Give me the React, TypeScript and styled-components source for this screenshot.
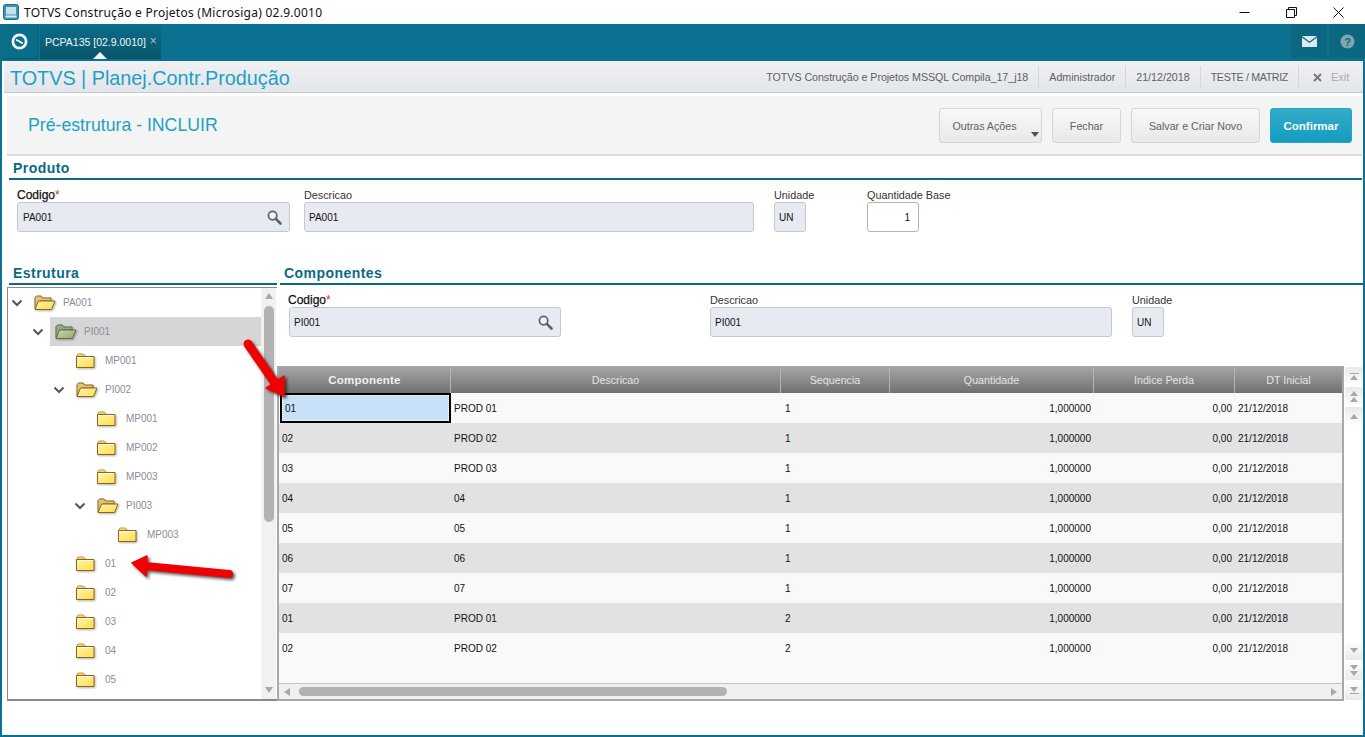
import React, { useId } from "react";
import styled, { createGlobalStyle } from "styled-components";

const Global = createGlobalStyle`
  html, body { margin: 0; padding: 0; background: #fff; overflow: hidden; }
  * { box-sizing: border-box; }
  body { font-family: "Liberation Sans", Arial, sans-serif; }
`;

const TEAL = "#0b7190";
const DARKTEAL = "#0b6a85";

const Page = styled.div`
  position: relative;
  width: 1365px;
  height: 737px;
  display: flex;
  flex-direction: column;
  overflow: hidden;
`;
const TitleBar = styled.div`
  height: 24px;
  display: flex;
  align-items: center;
  padding-left: 3px;
  background: #fff;
`;
const TitleText = styled.span`
  margin-left: 5px;
  font-family: "Noto Sans", sans-serif;
  font-size: 12px;
  letter-spacing: 0.26px;
  color: #111;
  flex: 1;
  white-space: nowrap;
`;
const WinButtons = styled.div`
  display: flex;
  height: 24px;
  padding-right: 3px;
`;
const WinButton = styled.div`
  width: 47px;
  display: flex;
  align-items: center;
  justify-content: center;
`;
const TabBar = styled.div`
  height: 37px;
  background: ${TEAL};
  display: flex;
  align-items: flex-start;
`;
const LogoButton = styled.div`
  width: 37px;
  height: 35px;
  margin-left: 1px;
  background: #0b6d8a;
  border-right: 1px solid #0a5a72;
  border-bottom: 1px solid #0a5a72;
  display: flex;
  align-items: center;
  justify-content: center;
`;
const Tab = styled.div`
  position: relative;
  width: 121px;
  height: 35px;
  margin-left: 2px;
  padding: 11px 0 0 5px;
  background: linear-gradient(#0b6e8b, #0a5568);
  color: #eef6f9;
  font-size: 10.5px;
  white-space: nowrap;
  &::after {
    content: "";
    position: absolute;
    left: 53px;
    bottom: 0;
    border-left: 7px solid transparent;
    border-right: 7px solid transparent;
    border-bottom: 7px solid #f2f3f5;
  }
`;
const TabClose = styled.span`
  margin-left: 4px;
  color: #9fc4d0;
  font-size: 12px;
  position: relative;
  top: -1px;
`;
const Spacer = styled.div`
  flex: 1;
`;
const BarIcon = styled.div`
  width: 36px;
  height: 34px;
  margin-left: 2px;
  background: #0b6780;
  display: flex;
  align-items: center;
  justify-content: center;
`;
const Body = styled.div`
  flex: 1;
  display: flex;
  flex-direction: column;
  border-left: 2px solid ${TEAL};
  border-right: 2px solid ${TEAL};
  border-bottom: 2px solid ${TEAL};
  min-height: 0;
`;
const HeaderBar = styled.div`
  height: 32px;
  margin-left: 2px;
  display: flex;
  align-items: center;
  padding-top: 1px;
  background: linear-gradient(#f0f1f4, #e2e5e9);
  border-bottom: 1px solid #c6c8cb;
`;
const AppName = styled.h1`
  margin: 2px 0 0 6px;
  font-weight: 400;
  font-size: 19.8px;
  color: #1f9fc4;
  flex: 1;
  white-space: nowrap;
`;
const HeaderItem = styled.div<{ $ls?: number }>`
  height: 23px;
  padding: 0 10px;
  display: flex;
  align-items: center;
  font-size: 10.7px;
  letter-spacing: ${(p) => p.$ls ?? 0}px;
  color: #5c6166;
  border-right: 1px solid #d5d7da;
  white-space: nowrap;
`;
const ExitItem = styled.div`
  width: 64px;
  display: flex;
  align-items: center;
  padding-left: 14px;
  font-size: 11px;
  color: #a9adb1;
  gap: 9px;
`;
const SubHeader = styled.div`
  height: 60px;
  margin: 3px 1px 0 5px;
  display: flex;
  align-items: center;
  justify-content: space-between;
  padding: 0 10px 0 21px;
  background: #f3f4f4;
  border-bottom: 2px solid #dcdcdc;
`;
const PageTitle = styled.h2`
  margin: 0;
  font-weight: 400;
  font-size: 17.7px;
  color: #1f9fc4;
`;
const Actions = styled.div`
  display: flex;
  gap: 10px;
`;
const Btn = styled.button<{ $w: number; $primary?: boolean; $pr?: number }>`
  position: relative;
  width: ${(p) => p.$w}px;
  height: 35px;
  border-radius: 3px;
  font-family: "Liberation Sans", sans-serif;
  font-size: ${(p) => (p.$primary ? 11.5 : 10.7)}px;
  font-weight: ${(p) => (p.$primary ? 700 : 400)};
  border: 1px solid ${(p) => (p.$primary ? "#2aa3c4" : "#d5d5d5")};
  color: ${(p) => (p.$primary ? "#f4fbfd" : "#5e6268")};
  background: ${(p) =>
    p.$primary ? "linear-gradient(#35abc8, #139cc2)" : "linear-gradient(#f8f8f8, #e9e9ea)"};
  padding: 2px ${(p) => p.$pr ?? 0}px 0 0;
`;
const Caret = styled.span`
  position: absolute;
  right: 2px;
  bottom: 5px;
  border-left: 4.5px solid transparent;
  border-right: 4.5px solid transparent;
  border-top: 5px solid #4d5257;
`;
const SectionTitle = styled.div<{ $ml: number }>`
  height: 24px;
  margin-left: ${(p) => p.$ml}px;
  padding: 5px 0 0 4px;
  font-size: 14px;
  line-height: 14px;
  font-weight: 700;
  letter-spacing: 0.45px;
  color: ${DARKTEAL};
  border-bottom: 2px solid ${DARKTEAL};
`;
const ProductSection = styled.section`
  margin-right: 1px;
`;
const Fields = styled.div<{ $pl: number; $pt: number }>`
  display: flex;
  padding: ${(p) => p.$pt}px 0 0 ${(p) => p.$pl}px;
`;
const Field = styled.div<{ $w: number; $mr: number }>`
  width: ${(p) => p.$w}px;
  margin-right: ${(p) => p.$mr}px;
  flex: none;
`;
const Label = styled.div<{ $strong?: boolean; $ml?: number }>`
  height: 14px;
  margin-left: ${(p) => p.$ml ?? 0}px;
  font-size: ${(p) => (p.$strong ? 12 : 10.8)}px;
  line-height: 14px;
  color: ${(p) => (p.$strong ? "#111" : "#333")};
  -webkit-text-stroke: ${(p) => (p.$strong ? "0.25px #111" : "0")};
  white-space: nowrap;
  b {
    color: #e3202a;
    font-weight: 400;
    -webkit-text-stroke: 0;
  }
`;
const Input = styled.div<{ $white?: boolean; $right?: boolean; $pl?: number }>`
  position: relative;
  height: 30px;
  display: flex;
  align-items: center;
  justify-content: ${(p) => (p.$right ? "flex-end" : "flex-start")};
  padding: 0 ${(p) => (p.$right ? 8 : 4)}px 0 ${(p) => p.$pl ?? (p.$right ? 8 : 4)}px;
  border: 1px solid ${(p) => (p.$white ? "#b4b4b4" : "#c4c8ce")};
  border-radius: 3px;
  background: ${(p) => (p.$white ? "#fff" : "#e7eaf1")};
  font-size: 10px;
  color: #111;
`;
const SearchSlot = styled.span`
  position: absolute;
  right: 7px;
  top: 7px;
  display: flex;
`;
const Split = styled.div`
  display: flex;
  margin-top: 29px;
`;
const LeftCol = styled.div`
  width: 275px;
  flex: none;
`;
const RightCol = styled.div`
  flex: 1;
  min-width: 0;
`;
const TreePanel = styled.div`
  position: relative;
  width: 270px;
  height: 414px;
  margin: 2px 0 0 5px;
  display: flex;
  border: 1px solid #8a8a8a;
  border-right: none;
  border-bottom-width: 2px;
`;
const TreeList = styled.div`
  flex: 1;
  height: 100%;
  overflow: hidden;
`;
const TreeRowWrap = styled.div<{ $level: number }>`
  height: 29px;
  display: flex;
  padding-left: ${(p) => p.$level * 21}px;
`;
const ChevronSlot = styled.div`
  width: 21px;
  flex: none;
  display: flex;
  align-items: center;
  padding-left: 3px;
`;
const TreeContent = styled.div<{ $selected?: boolean }>`
  flex: 1;
  display: flex;
  align-items: center;
  padding-left: 5px;
  background: ${(p) => (p.$selected ? "#d6d6d6" : "transparent")};
`;
const FolderSlot = styled.div`
  width: 29px;
  flex: none;
  display: flex;
`;
const TreeLabel = styled.span`
  font-size: 10px;
  color: #8b8d98;
`;
const VScroll = styled.div`
  width: 15px;
  height: 100%;
  flex: none;
  background: #f1f1f1;
  display: flex;
  flex-direction: column;
  align-items: center;
  justify-content: space-between;
  padding: 5px 0 6px;
  margin-right: 1px;
`;
const VThumb = styled.div`
  width: 10px;
  height: 216px;
  margin-top: 7px;
  margin-bottom: auto;
  border-radius: 5px;
  background: #b2b2b2;
`;
const ArrowUp = styled.span<{ $c?: string }>`
  width: 0;
  height: 0;
  border-left: 4px solid transparent;
  border-right: 4px solid transparent;
  border-bottom: 6px solid ${(p) => p.$c || "#a8a8a8"};
`;
const ArrowDown = styled.span`
  width: 0;
  height: 0;
  border-left: 4px solid transparent;
  border-right: 4px solid transparent;
  border-top: 6px solid #a8a8a8;
`;
const GridRow = styled.div`
  display: flex;
  margin-top: 29px;
  height: 335px;
`;
const Table = styled.div`
  width: 1067px;
  flex: none;
  display: flex;
  flex-direction: column;
  border: 2px solid #a8a8a8;
  border-top-width: 1px;
  background: #f9f9f9;
`;
const COLS = "172px 330px 109px 204px 141px 1fr";
const HeadRow = styled.div`
  height: 26px;
  flex: none;
  display: grid;
  grid-template-columns: ${COLS};
  background: linear-gradient(#a6a6a6, #707070);
`;
const HeadCell = styled.div<{ $strong?: boolean }>`
  display: flex;
  align-items: center;
  justify-content: center;
  border-right: 1px solid #b5b5b5;
  font-size: ${(p) => (p.$strong ? 11.5 : 10.7)}px;
  font-weight: ${(p) => (p.$strong ? 700 : 400)};
  letter-spacing: ${(p) => (p.$strong ? 0.2 : 0)}px;
  color: ${(p) => (p.$strong ? "#f0f0f0" : "#e4e4e4")};
  &:last-child {
    border-right: none;
  }
`;
const Rows = styled.div`
  flex: 1;
  min-height: 0;
`;
const DataRow = styled.div<{ $alt: boolean }>`
  height: 30px;
  display: grid;
  grid-template-columns: ${COLS};
  background: ${(p) => (p.$alt ? "#e2e2e2" : "#f9f9f9")};
`;
const Cell = styled.div<{ $right?: boolean; $pl?: number; $active?: boolean }>`
  display: flex;
  align-items: center;
  justify-content: ${(p) => (p.$right ? "flex-end" : "flex-start")};
  padding: 0 3px 0 ${(p) => p.$pl ?? 3}px;
  font-size: 10px;
  color: #111;
  ${(p) =>
    p.$active
      ? `background:#c8e1f8;border:2px solid #000;margin-left:1px;padding-left:3px;outline:1px dotted #fff;outline-offset:-3px;`
      : ""}
`;
const HScroll = styled.div`
  height: 16px;
  flex: none;
  display: flex;
  align-items: center;
  padding: 0 5px;
  background: #f0f0f0;
  border-top: 1px solid #c4c4c4;
`;
const HThumb = styled.div`
  width: 428px;
  height: 9px;
  margin-left: 9px;
  margin-right: auto;
  border-radius: 5px;
  background: #b2b2b2;
`;
const ArrowLeft = styled.span`
  border-top: 4px solid transparent;
  border-bottom: 4px solid transparent;
  border-right: 6px solid #a8a8a8;
`;
const ArrowRight = styled.span`
  border-top: 4px solid transparent;
  border-bottom: 4px solid transparent;
  border-left: 6px solid #a8a8a8;
`;
const SideButtons = styled.div`
  width: 19px;
  padding: 1px 0 1px 1px;
  display: flex;
  flex-direction: column;
`;
const SideGroup = styled.div`
  display: flex;
  flex-direction: column;
  gap: 1px;
`;
const SideFill = styled.div`
  flex: 1;
`;
const SideBtn = styled.div<{ $down?: boolean }>`
  height: 19px;
  display: flex;
  flex-direction: column;
  align-items: center;
  justify-content: center;
  gap: 1px;
  border-radius: 2px;
  background: ${(p) =>
    p.$down ? "linear-gradient(#fff, #e9e9e9)" : "linear-gradient(#e9e9e9, #fff)"};
`;
const Bar = styled.span`
  width: 9px;
  height: 1px;
  background: #a8a8a8;
`;
const MiniUp = styled.span`
  border-left: 4.5px solid transparent;
  border-right: 4.5px solid transparent;
  border-bottom: 5px solid #a8a8a8;
`;
const MiniDown = styled.span`
  border-left: 4.5px solid transparent;
  border-right: 4.5px solid transparent;
  border-top: 5px solid #a8a8a8;
`;
const Overlay = styled.svg`
  position: absolute;
  left: 0;
  top: 0;
  pointer-events: none;
  filter: drop-shadow(2px 2px 1.5px rgba(0, 0, 0, 0.65));
`;

function Chevron() {
  return (
    <svg width="12" height="8" viewBox="0 0 12 8">
      <path d="M1.5 1.5 6 6l4.5-4.5" fill="none" stroke="#555" strokeWidth="2" />
    </svg>
  );
}

function Folder({ open, green }: { open?: boolean; green?: boolean }) {
  const id = useId();
  const edge = green ? "#5f6d4b" : "#8a6420";
  const c1 = green ? "#cfdcae" : "#fff6b0";
  const c2 = green ? "#8ea56a" : "#ffdc48";
  const back = green ? "#9aa886" : "#e6c46f";
  return (
    <svg width="23" height="18" viewBox="0 0 23 18" style={{ filter: "drop-shadow(1.5px 1.5px 1px rgba(0,0,0,.3))" }}>
      <defs>
        <linearGradient id={id} x1="0" y1="0" x2="1" y2="1">
          <stop offset="0" stopColor={c1} />
          <stop offset="1" stopColor={c2} />
        </linearGradient>
      </defs>
      {open ? (
        <>
          <path d="M1 15V3.5L2.5 2H7l1.5 2H17v3H6L3 15Z" fill={back} stroke={edge} />
          <path d="M1 15.5 4.5 7H21l-3.5 8.5Z" fill={`url(#${id})`} stroke={edge} />
        </>
      ) : (
        <>
          <path d="M1 5V3l1-1h5l2 2v2H1Z" fill="#f6d66c" stroke="#c9a03c" />
          <path d="M.5 15.5V4.5h17.5v11Z" fill={`url(#${id})`} stroke={edge} />
          <path d="M1 5.5h16" stroke="#fffbe0" />
        </>
      )}
    </svg>
  );
}

type Node = { label: string; level: number; kind: "open" | "closed" | "green"; chevron?: boolean };
const tree: Node[] = [
  { label: "PA001", level: 0, kind: "open", chevron: true },
  { label: "PI001", level: 1, kind: "green", chevron: true },
  { label: "MP001", level: 2, kind: "closed" },
  { label: "PI002", level: 2, kind: "open", chevron: true },
  { label: "MP001", level: 3, kind: "closed" },
  { label: "MP002", level: 3, kind: "closed" },
  { label: "MP003", level: 3, kind: "closed" },
  { label: "PI003", level: 3, kind: "open", chevron: true },
  { label: "MP003", level: 4, kind: "closed" },
  { label: "01", level: 2, kind: "closed" },
  { label: "02", level: 2, kind: "closed" },
  { label: "03", level: 2, kind: "closed" },
  { label: "04", level: 2, kind: "closed" },
  { label: "05", level: 2, kind: "closed" },
];

const rows = [
  ["01", "PROD 01", "1"],
  ["02", "PROD 02", "1"],
  ["03", "PROD 03", "1"],
  ["04", "04", "1"],
  ["05", "05", "1"],
  ["06", "06", "1"],
  ["07", "07", "1"],
  ["01", "PROD 01", "2"],
  ["02", "PROD 02", "2"],
];

function SearchIcon() {
  return (
    <svg width="15" height="15" viewBox="0 0 15 15">
      <circle cx="5.6" cy="5.6" r="4.2" fill="#f1f3f6" stroke="#566370" strokeWidth="1.7" />
      <path d="M8.8 8.8 13.5 13.5" stroke="#566370" strokeWidth="2.6" strokeLinecap="round" />
    </svg>
  );
}

export default function App() {
  return (
    <Page>
      <Global />
      <TitleBar>
        <svg width="16" height="16" viewBox="0 0 16 16">
          <rect x="0.5" y="0.5" width="15" height="15" rx="2" fill="#3a93b8" stroke="#1e6f91" />
          <rect x="3" y="3" width="10" height="7.5" fill="#c9e0ea" />
          <rect x="2.5" y="11.5" width="11" height="2" fill="#e3eef3" />
        </svg>
        <TitleText>TOTVS Construção e Projetos (Microsiga) 02.9.0010</TitleText>
        <WinButtons>
          <WinButton>
            <svg width="11" height="11" viewBox="0 0 11 11">
              <path d="M.5 5.5h10" stroke="#111" />
            </svg>
          </WinButton>
          <WinButton>
            <svg width="11" height="11" viewBox="0 0 11 11">
              <path d="M.5 2.5h8v8h-8zM2.5 2.5v-2h8v8h-2" fill="none" stroke="#111" />
            </svg>
          </WinButton>
          <WinButton>
            <svg width="11" height="11" viewBox="0 0 11 11">
              <path d="M.5.5l10 10M10.5.5l-10 10" stroke="#111" />
            </svg>
          </WinButton>
        </WinButtons>
      </TitleBar>
      <TabBar>
        <LogoButton>
          <svg width="17" height="17" viewBox="0 0 17 17">
            <circle cx="8.5" cy="8.5" r="6.6" fill="none" stroke="#eef5f8" strokeWidth="2.8" />
            <path d="M5 7 C7.5 6.8 9.5 10.2 12 10" fill="none" stroke="#eef5f8" strokeWidth="1.8" />
          </svg>
        </LogoButton>
        <Tab>
          PCPA135 [02.9.0010]<TabClose>×</TabClose>
        </Tab>
        <Spacer />
        <BarIcon>
          <svg width="15" height="11" viewBox="0 0 15 11">
            <path d="M0 0h15L7.5 5.5Z" fill="#dce9ee" />
            <path d="M0 1.6V11h15V1.6L7.5 7Z" fill="#dce9ee" />
          </svg>
        </BarIcon>
        <BarIcon>
          <svg width="15" height="15" viewBox="0 0 15 15">
            <circle cx="7.5" cy="7.5" r="7" fill="#7fa5b3" />
            <text x="7.5" y="11.5" textAnchor="middle" fontSize="11" fontWeight="700" fontFamily="Liberation Sans" fill="#0b6780">?</text>
          </svg>
        </BarIcon>
      </TabBar>
      <Body>
        <HeaderBar>
          <AppName>TOTVS | Planej.Contr.Produção</AppName>
          <HeaderItem $ls={-0.05}>TOTVS Construção e Projetos MSSQL Compila_17_j18</HeaderItem>
          <HeaderItem>Administrador</HeaderItem>
          <HeaderItem>21/12/2018</HeaderItem>
          <HeaderItem $ls={-0.36}>TESTE / MATRIZ</HeaderItem>
          <ExitItem>
            <svg width="9" height="9" viewBox="0 0 9 9">
              <path d="M1 1l7 7M8 1 1 8" stroke="#767a7e" strokeWidth="2" />
            </svg>
            Exit
          </ExitItem>
        </HeaderBar>
        <SubHeader>
          <PageTitle>Pré-estrutura - INCLUIR</PageTitle>
          <Actions>
            <Btn $w={103} $pr={12}>
              Outras Ações
              <Caret />
            </Btn>
            <Btn $w={69}>Fechar</Btn>
            <Btn $w={129}>Salvar e Criar Novo</Btn>
            <Btn $w={82} $primary>
              Confirmar
            </Btn>
          </Actions>
        </SubHeader>
        <ProductSection>
          <SectionTitle $ml={7}>Produto</SectionTitle>
          <Fields $pl={15} $pt={8}>
            <Field $w={273} $mr={14}>
              <Label $strong>
                Codigo<b>*</b>
              </Label>
              <Input $pl={5}>
                PA001
                <SearchSlot>
                  <SearchIcon />
                </SearchSlot>
              </Input>
            </Field>
            <Field $w={450} $mr={20}>
              <Label>Descricao</Label>
              <Input>PA001</Input>
            </Field>
            <Field $w={32} $mr={61}>
              <Label>Unidade</Label>
              <Input>UN</Input>
            </Field>
            <Field $w={52} $mr={0}>
              <Label>Quantidade Base</Label>
              <Input $white $right>
                1
              </Input>
            </Field>
          </Fields>
        </ProductSection>
        <Split>
          <LeftCol>
            <SectionTitle $ml={7}>Estrutura</SectionTitle>
            <TreePanel>
              <TreeList>
                {tree.map((n, i) => (
                  <TreeRowWrap key={i} $level={n.level}>
                    <ChevronSlot>{n.chevron && <Chevron />}</ChevronSlot>
                    <TreeContent $selected={n.kind === "green"}>
                      <FolderSlot>
                        <Folder open={n.kind !== "closed"} green={n.kind === "green"} />
                      </FolderSlot>
                      <TreeLabel>{n.label}</TreeLabel>
                    </TreeContent>
                  </TreeRowWrap>
                ))}
              </TreeList>
              <VScroll>
                <ArrowUp />
                <VThumb />
                <ArrowDown />
              </VScroll>
            </TreePanel>
          </LeftCol>
          <RightCol>
            <SectionTitle $ml={3}>Componentes</SectionTitle>
            <Fields $pl={12} $pt={8}>
              <Field $w={272} $mr={149}>
                <Label $strong $ml={-1}>
                  Codigo<b>*</b>
                </Label>
                <Input>
                  PI001
                  <SearchSlot>
                    <SearchIcon />
                  </SearchSlot>
                </Input>
              </Field>
              <Field $w={402} $mr={20}>
                <Label>Descricao</Label>
                <Input>PI001</Input>
              </Field>
              <Field $w={32} $mr={0}>
                <Label>Unidade</Label>
                <Input>UN</Input>
              </Field>
            </Fields>
            <GridRow>
              <Table>
                <HeadRow>
                  <HeadCell $strong>Componente</HeadCell>
                  <HeadCell>Descricao</HeadCell>
                  <HeadCell>Sequencia</HeadCell>
                  <HeadCell>Quantidade</HeadCell>
                  <HeadCell>Indice Perda</HeadCell>
                  <HeadCell>DT Inicial</HeadCell>
                </HeadRow>
                <Rows>
                  {rows.map((r, i) => (
                    <DataRow key={i} $alt={i % 2 === 1}>
                      <Cell $active={i === 0}>{r[0]}</Cell>
                      <Cell>{r[1]}</Cell>
                      <Cell $pl={4}>{r[2]}</Cell>
                      <Cell $right>1,000000</Cell>
                      <Cell $right>0,00</Cell>
                      <Cell>21/12/2018</Cell>
                    </DataRow>
                  ))}
                </Rows>
                <HScroll>
                  <ArrowLeft />
                  <HThumb />
                  <ArrowRight />
                </HScroll>
              </Table>
              <SideButtons>
                <SideGroup>
                  <SideBtn>
                    <Bar />
                    <MiniUp />
                  </SideBtn>
                  <SideBtn>
                    <MiniUp />
                    <MiniUp />
                  </SideBtn>
                  <SideBtn>
                    <MiniUp />
                  </SideBtn>
                </SideGroup>
                <SideFill />
                <SideGroup>
                  <SideBtn $down>
                    <MiniDown />
                  </SideBtn>
                  <SideBtn $down>
                    <MiniDown />
                    <MiniDown />
                  </SideBtn>
                  <SideBtn $down>
                    <MiniDown />
                    <Bar />
                  </SideBtn>
                </SideGroup>
              </SideButtons>
            </GridRow>
          </RightCol>
        </Split>
      </Body>
      <Overlay width="1365" height="737" viewBox="0 0 1365 737">
        <path d="M248 344 275 383" stroke="#f00000" strokeWidth="9" strokeLinecap="round" />
        <path d="M284 396 266 388 284 376Z" fill="#f00000" stroke="#f00000" strokeWidth="1.5" strokeLinejoin="round" />
        <path d="M145 566 229 574" stroke="#f00000" strokeWidth="8" strokeLinecap="round" />
        <path d="M132 563 147 556 146 576Z" fill="#f00000" stroke="#f00000" strokeWidth="1.5" strokeLinejoin="round" />
      </Overlay>
    </Page>
  );
}
